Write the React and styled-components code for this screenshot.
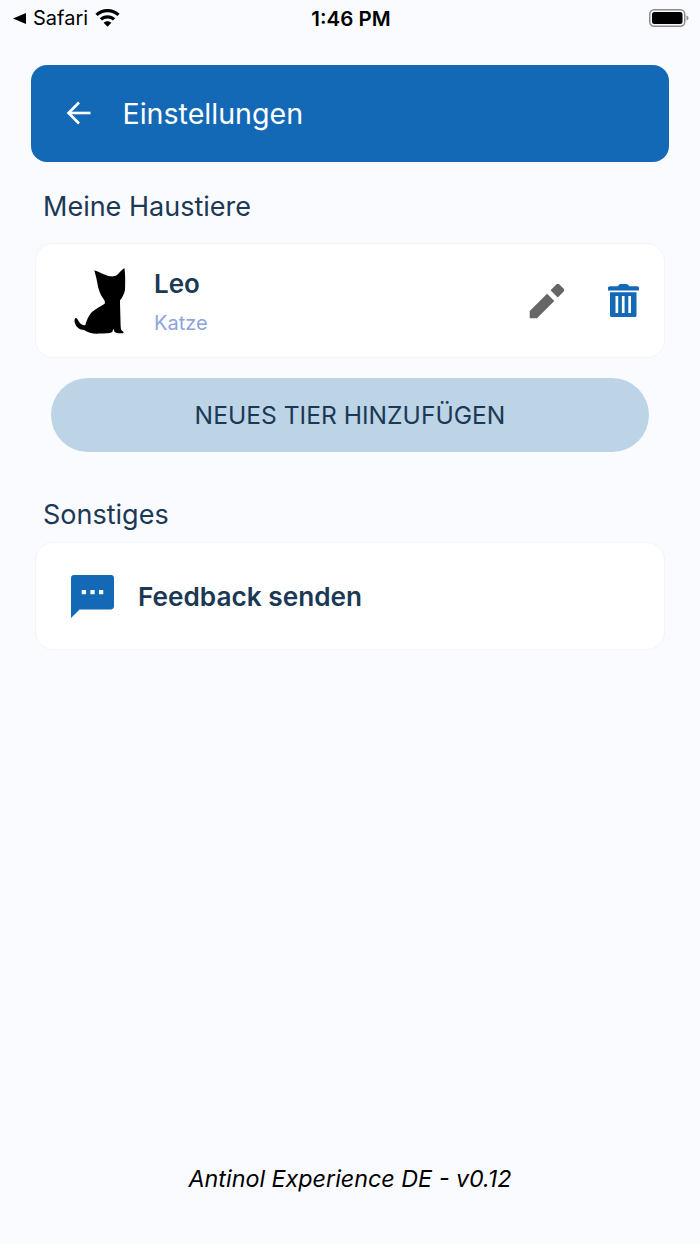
import React from "react";
import styled, { createGlobalStyle } from "styled-components";

const GlobalStyle = createGlobalStyle`
  html, body {
    margin: 0;
    padding: 0;
    background: #fafbff;
  }
  * {
    box-sizing: border-box;
  }
`;

const Page = styled.div`
  display: flex;
  flex-direction: column;
  width: 700px;
  height: 1244px;
  overflow: hidden;
  font-family: "Inter", "Liberation Sans", sans-serif;
  color: #1b3854;
  background: #fafbff;
`;

const StatusBar = styled.div`
  display: grid;
  grid-template-columns: 1fr auto 1fr;
  align-items: center;
  height: 36px;
  padding: 0 11px 0 13px;
  color: #000;
  font-size: 20px;
`;

const StatusLeft = styled.div`
  display: flex;
  align-items: center;
  gap: 7px;
`;

const StatusRight = styled.div`
  display: flex;
  justify-content: flex-end;
`;

const Time = styled.div`
  font-weight: 600;
  font-size: 20.5px;
`;

const Header = styled.header`
  display: flex;
  align-items: center;
  gap: 31px;
  height: 97px;
  margin: 29px 31px 0 30.5px;
  padding: 0 0 1px 35px;
  background: #1469b6;
  border-radius: 16px;
  color: #fff;
  font-size: 28.6px;
`;

const SectionTitle = styled.h2`
  margin: ${(props) => props.$top}px 0 0 43px;
  font-size: 27px;
  line-height: 34px;
  font-weight: 400;
  color: #1b3854;
`;

const Card = styled.div`
  display: flex;
  align-items: center;
  height: ${(props) => props.$height}px;
  margin: ${(props) => props.$top}px 35px 0 35px;
  background: #fff;
  border: 1px solid #f2f4f9;
  border-radius: 18px;
`;

const CatSlot = styled.div`
  display: flex;
  width: 118px;
  padding-left: 34px;
  margin-top: -1px;
`;

const PetInfo = styled.div`
  display: flex;
  flex: 1;
  flex-direction: column;
  gap: 11px;
  margin-top: 1px;
`;

const PetName = styled.div`
  font-size: 26px;
  line-height: 32px;
  font-weight: 600;
`;

const PetKind = styled.div`
  font-size: 20px;
  line-height: 24px;
  color: #8fa3dc;
`;

const IconRow = styled.div`
  display: flex;
  align-items: center;
  gap: 38px;
  padding-right: 25px;
`;

const AddButton = styled.button`
  display: block;
  width: 598px;
  height: 74px;
  margin: 20px 0 0 51px;
  border: none;
  border-radius: 37px;
  background: #bdd4e7;
  font-family: inherit;
  font-size: 24.6px;
  color: #1b3854;
`;

const FeedbackIcon = styled.div`
  display: flex;
  margin-left: 35px;
  margin-right: 24px;
`;

const FeedbackLabel = styled.div`
  font-size: 26.2px;
  font-weight: 600;
`;

const Footer = styled.footer`
  margin-top: auto;
  padding-bottom: 49px;
  text-align: center;
  font-size: 23.3px;
  line-height: 32px;
  font-style: italic;
  color: #000;
`;

function BackTriangle() {
  return (
    <svg width="13" height="11" viewBox="0 0 13 11">
      <path d="M0 5.5L13 0v11z" fill="#000" />
    </svg>
  );
}

function Wifi() {
  return (
    <svg width="25" height="18" viewBox="0 0 25 18">
      <path
        d="M12.5 0C7.8 0 3.6 1.8.4 4.8l2.2 2.3C5.2 4.7 8.7 3.2 12.5 3.2s7.3 1.5 9.9 3.9l2.2-2.3C21.4 1.8 17.2 0 12.5 0z"
        fill="#000"
      />
      <path
        d="M12.5 6.2c-3 0-5.7 1.2-7.7 3l2.2 2.3c1.4-1.3 3.4-2.1 5.5-2.1s4.1.8 5.500 2.100l2.200-2.300c-2-1.800-4.700-3-7.700-3z"
        fill="#000"
      />
      <path d="M12.5 12.2c-1.5 0-2.9.6-3.9 1.5l3.9 4.1 3.9-4.1c-1-.9-2.4-1.500-3.900-1.500z" fill="#000" />
    </svg>
  );
}

function Battery() {
  return (
    <svg width="40" height="18" viewBox="0 0 40 18">
      <rect x="0.75" y="0.75" width="35" height="16.5" rx="4.5" fill="none" stroke="#8a8a8a" strokeWidth="1.5" />
      <rect x="3" y="3" width="30.5" height="12" rx="2.5" fill="#000" />
      <path d="M37.5 6.5c1.2.4 2 1.400 2 2.500s-.8 2.100-2 2.500z" fill="#8a8a8a" />
    </svg>
  );
}

function BackArrow() {
  return (
    <svg width="26" height="26" viewBox="0 0 26 26" fill="none" stroke="#fff" strokeWidth="2.6">
      <path d="M24.5 13H3" />
      <path d="M13 2.5L2.500 13 13 23.500" />
    </svg>
  );
}

function Cat() {
  return (
    <svg width="62" height="75" viewBox="0 0 186 225">
      <path
        d="M73 22C82 24 100 36 120 40C128 41 136 40 141 36C148 29 156 20 163 15C166 30 166 60 165 80C163 92 157 104 150 112C150 130 152 170 152 190C152 198 154 204 160 206C162 209 160 211 156 211C148 211 138 211 134 207L130 197L127 207C118 212 100 211 80 212C66 212 52 208 42 201C30 201 18 194 14 178C13 170 14 165 18 165C22 165 24 172 28 178C32 184 40 188 46 186C50 172 56 158 65 148C76 138 92 130 104 122C106 116 104 112 100 107C90 94 84 76 82 60C80 46 75 32 73 22Z"
        fill="#000"
      />
    </svg>
  );
}

function Pencil() {
  return (
    <svg width="46" height="46" viewBox="0 0 24 24">
      <path
        d="M3 17.25V21h3.75L15.8 11.95l-3.75-3.75L3 17.25zM20.71 7.04c.39-.39.39-1.02 0-1.41l-2.34-2.34c-.39-.39-1.02-.39-1.41 0l-3.1 3.1 3.75 3.75 3.1-3.1z"
        fill="#666"
      />
    </svg>
  );
}

function Trash() {
  return (
    <svg width="31" height="33" viewBox="0 0 31 33">
      <path d="M0 4C0 3 .8 2.2 1.800 2.200H10C10.500.8 11.500 0 13 0h5c1.500 0 2.500.8 3 2.200h8.200C30.200 2.200 31 3 31 4v2.600H0z" fill="#1469b6" />
      <path
        d="M2 8.200h26.500v23.300c0 .8-.7 1.500-1.500 1.500H3.500C2.700 33 2 32.300 2 31.500zM7.500 12v17h2.700V12zM13.900 12v17h2.700V12zM20.300 12v17h2.700V12z"
        fill="#1469b6"
        fillRule="evenodd"
      />
    </svg>
  );
}

function Bubble() {
  return (
    <svg width="43" height="43" viewBox="2 2 20 20">
      <path
        d="M20.700 2H3.300C2.600 2 2.010 2.600 2.010 3.300L2 22l4-4h14.700c.7 0 1.300-.6 1.300-1.300V3.300C22 2.600 21.400 2 20.700 2zM9 11H7V9h2zm4 0h-2V9h2zm4 0h-2V9h2z"
        fill="#1469b6"
      />
    </svg>
  );
}

export default function App() {
  return (
    <>
      <GlobalStyle />
      <Page>
        <StatusBar>
          <StatusLeft>
            <BackTriangle />
            <span>Safari</span>
            <Wifi />
          </StatusLeft>
          <Time>1:46 PM</Time>
          <StatusRight>
            <Battery />
          </StatusRight>
        </StatusBar>
        <Header>
          <BackArrow />
          <span>Einstellungen</span>
        </Header>
        <SectionTitle $top={28}>Meine Haustiere</SectionTitle>
        <Card $top={19} $height={115}>
          <CatSlot>
            <Cat />
          </CatSlot>
          <PetInfo>
            <PetName>Leo</PetName>
            <PetKind>Katze</PetKind>
          </PetInfo>
          <IconRow>
            <Pencil />
            <Trash />
          </IconRow>
        </Card>
        <AddButton>NEUES TIER HINZUFÜGEN</AddButton>
        <SectionTitle $top={46}>Sonstiges</SectionTitle>
        <Card $top={10} $height={108}>
          <FeedbackIcon>
            <Bubble />
          </FeedbackIcon>
          <FeedbackLabel>Feedback senden</FeedbackLabel>
        </Card>
        <Footer>Antinol Experience DE - v0.12</Footer>
      </Page>
    </>
  );
}
